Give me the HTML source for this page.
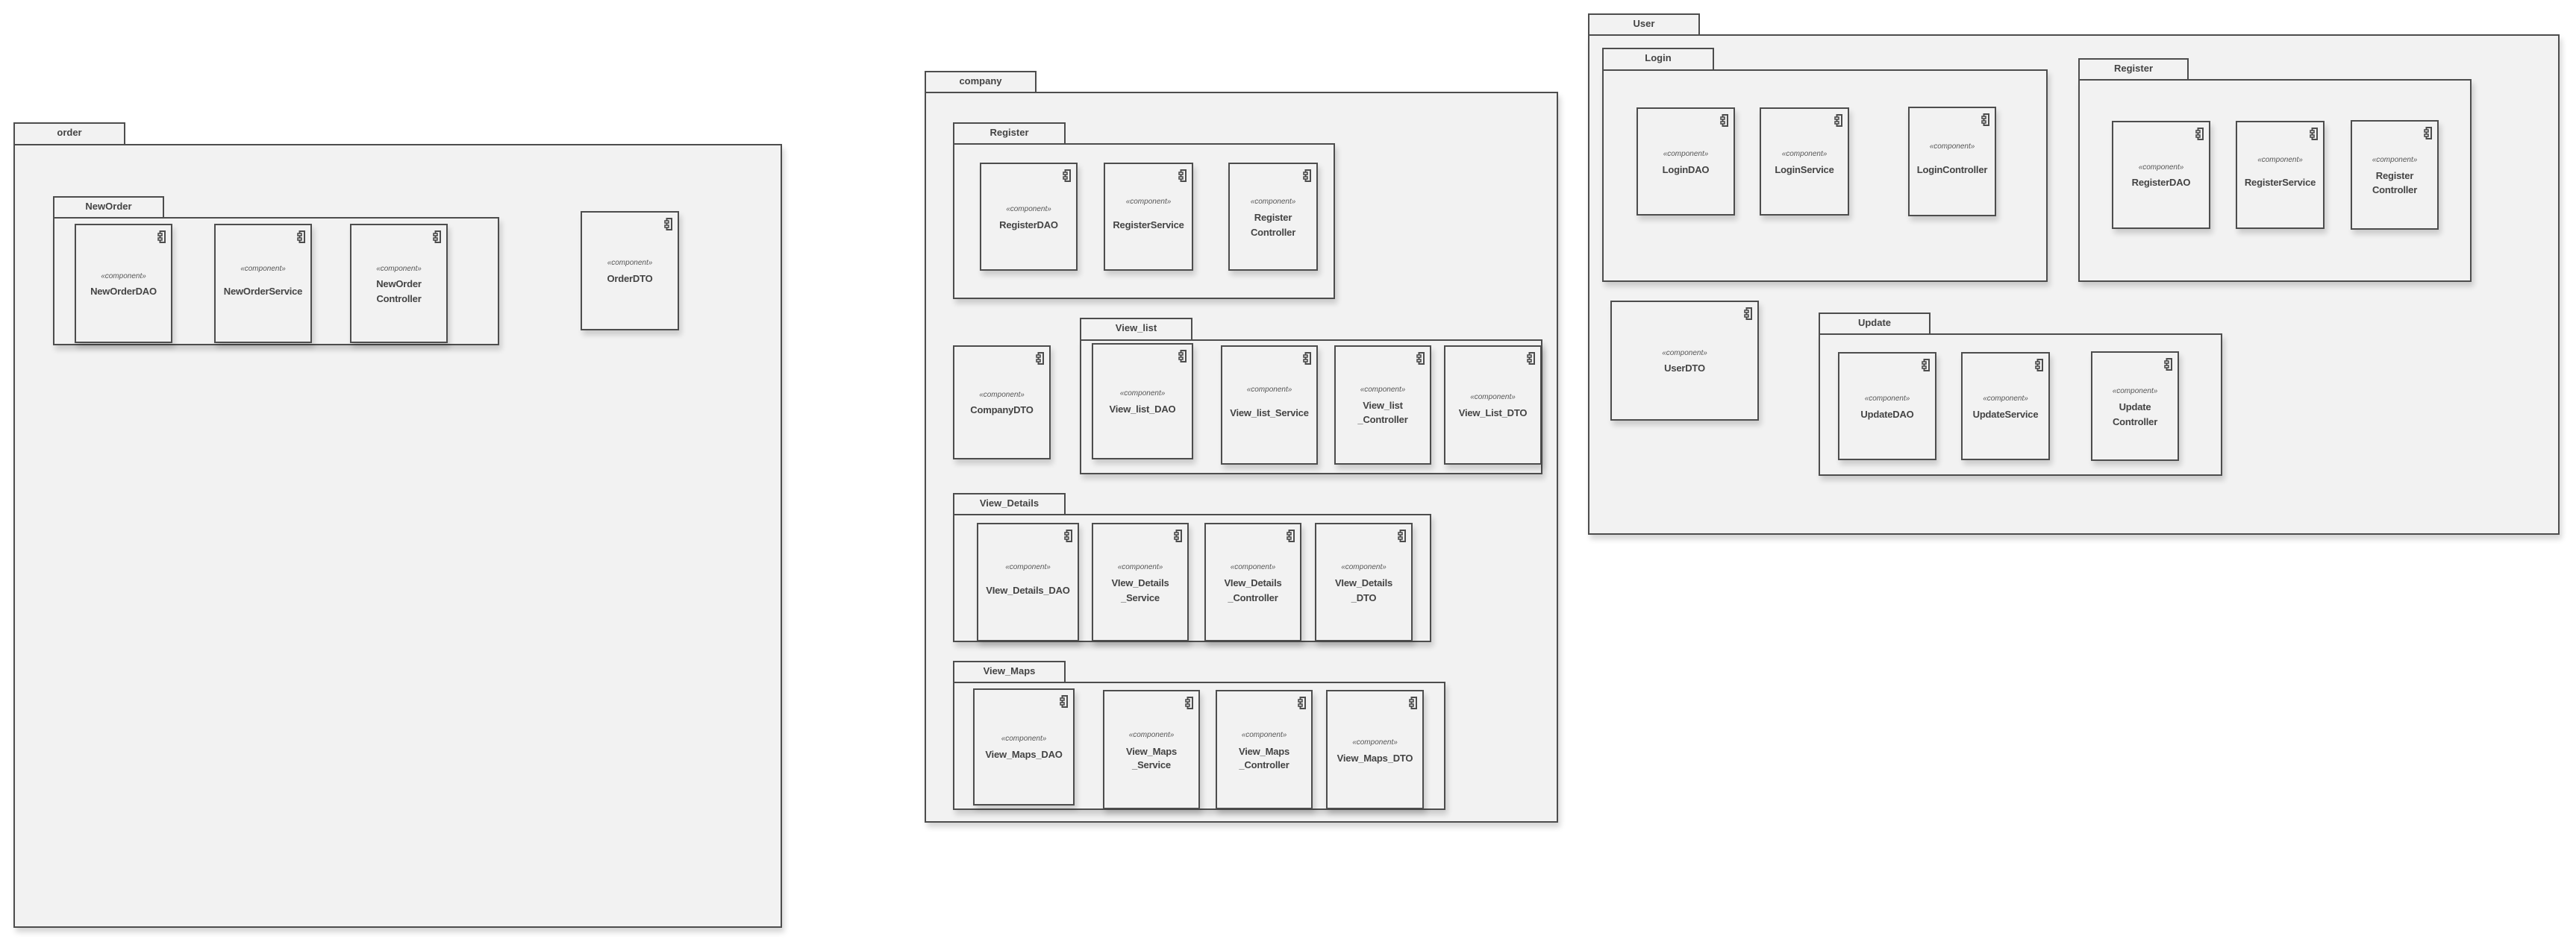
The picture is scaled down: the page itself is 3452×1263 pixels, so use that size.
<!DOCTYPE html>
<html><head><meta charset="utf-8"><style>
html,body{margin:0;padding:0;background:#fff;width:3452px;height:1263px;overflow:hidden;position:relative}
div{box-sizing:border-box}
.b,.t,.c{position:absolute;background:#f2f2f2;border:2px solid #4d4d4d}
.b,.c{box-shadow:3px 6px 7px rgba(0,0,0,.16)}
.t{font:bold 13px "Liberation Sans",sans-serif;color:#444;text-align:center;line-height:24px;border-bottom:none}
.c .i{position:absolute;top:7px;right:7px;width:11px;height:17px}
.s{position:absolute;left:0;width:100%;text-align:center;font:italic 10px "Liberation Sans",sans-serif;color:#555;line-height:14px;height:14px;margin-top:-7px;white-space:nowrap}
.n{position:absolute;left:0;width:100%;text-align:center;font:bold 13px "Liberation Sans",sans-serif;color:#444;line-height:18px;height:18px;margin-top:-9px;white-space:nowrap;letter-spacing:-0.2px}
</style></head><body>
<svg width="0" height="0" style="position:absolute"><defs><symbol id="ic" viewBox="0 0 11 17"><rect x="3.5" y="1" width="6.5" height="15" fill="#f2f2f2" stroke="#4d4d4d" stroke-width="2"/><rect x="1" y="4" width="5" height="3" fill="#f2f2f2" stroke="#4d4d4d" stroke-width="1.6"/><rect x="1" y="10" width="5" height="3" fill="#f2f2f2" stroke="#4d4d4d" stroke-width="1.6"/></symbol></defs></svg>

<!-- ORDER -->
<div class="t" style="left:18px;top:164px;width:150px;height:31px">order</div>
<div class="b" style="left:18px;top:193px;width:1030px;height:1051px"></div>
<div class="t" style="left:71px;top:263px;width:149px;height:30px">NewOrder</div>
<div class="b" style="left:71px;top:291px;width:598px;height:172px"></div>
<div class="c" style="left:100px;top:300px;width:131px;height:160px"><svg class="i"><use href="#ic"/></svg><div class="s" style="top:69px">«component»</div><div class="n" style="top:89px">NewOrderDAO</div></div>
<div class="c" style="left:287px;top:300px;width:131px;height:160px"><svg class="i"><use href="#ic"/></svg><div class="s" style="top:59px">«component»</div><div class="n" style="top:89px">NewOrderService</div></div>
<div class="c" style="left:469px;top:300px;width:131px;height:160px"><svg class="i"><use href="#ic"/></svg><div class="s" style="top:59px">«component»</div><div class="n" style="top:79px">NewOrder</div><div class="n" style="top:99px">Controller</div></div>
<div class="c" style="left:778px;top:283px;width:132px;height:160px"><svg class="i"><use href="#ic"/></svg><div class="s" style="top:68px">«component»</div><div class="n" style="top:89px">OrderDTO</div></div>

<!-- COMPANY -->
<div class="t" style="left:1239px;top:95px;width:150px;height:30px">company</div>
<div class="b" style="left:1239px;top:123px;width:849px;height:980px"></div>
<div class="t" style="left:1277px;top:164px;width:151px;height:30px">Register</div>
<div class="b" style="left:1277px;top:192px;width:512px;height:209px"></div>
<div class="c" style="left:1313px;top:218px;width:131px;height:145px"><svg class="i"><use href="#ic"/></svg><div class="s" style="top:61px">«component»</div><div class="n" style="top:82px">RegisterDAO</div></div>
<div class="c" style="left:1479px;top:218px;width:120px;height:145px"><svg class="i"><use href="#ic"/></svg><div class="s" style="top:51px">«component»</div><div class="n" style="top:82px">RegisterService</div></div>
<div class="c" style="left:1646px;top:218px;width:120px;height:145px"><svg class="i"><use href="#ic"/></svg><div class="s" style="top:51px">«component»</div><div class="n" style="top:72px">Register</div><div class="n" style="top:92px">Controller</div></div>
<div class="c" style="left:1277px;top:463px;width:131px;height:153px"><svg class="i"><use href="#ic"/></svg><div class="s" style="top:65px">«component»</div><div class="n" style="top:85px">CompanyDTO</div></div>
<div class="t" style="left:1447px;top:426px;width:151px;height:31px">View_list</div>
<div class="b" style="left:1447px;top:455px;width:620px;height:181px"></div>
<div class="c" style="left:1463px;top:460px;width:136px;height:156px"><svg class="i"><use href="#ic"/></svg><div class="s" style="top:66px">«component»</div><div class="n" style="top:87px">View_list_DAO</div></div>
<div class="c" style="left:1636px;top:463px;width:130px;height:160px"><svg class="i"><use href="#ic"/></svg><div class="s" style="top:58px">«component»</div><div class="n" style="top:89px">View_list_Service</div></div>
<div class="c" style="left:1788px;top:463px;width:130px;height:160px"><svg class="i"><use href="#ic"/></svg><div class="s" style="top:58px">«component»</div><div class="n" style="top:79px">View_list</div><div class="n" style="top:98px">_Controller</div></div>
<div class="c" style="left:1935px;top:463px;width:131px;height:160px"><svg class="i"><use href="#ic"/></svg><div class="s" style="top:68px">«component»</div><div class="n" style="top:89px">View_List_DTO</div></div>
<div class="t" style="left:1277px;top:661px;width:151px;height:30px">View_Details</div>
<div class="b" style="left:1277px;top:689px;width:641px;height:172px"></div>
<div class="c" style="left:1309px;top:701px;width:137px;height:159px"><svg class="i"><use href="#ic"/></svg><div class="s" style="top:58px">«component»</div><div class="n" style="top:89px">VIew_Details_DAO</div></div>
<div class="c" style="left:1463px;top:701px;width:130px;height:159px"><svg class="i"><use href="#ic"/></svg><div class="s" style="top:58px">«component»</div><div class="n" style="top:79px">VIew_Details</div><div class="n" style="top:99px">_Service</div></div>
<div class="c" style="left:1614px;top:701px;width:130px;height:159px"><svg class="i"><use href="#ic"/></svg><div class="s" style="top:58px">«component»</div><div class="n" style="top:79px">VIew_Details</div><div class="n" style="top:99px">_Controller</div></div>
<div class="c" style="left:1762px;top:701px;width:131px;height:159px"><svg class="i"><use href="#ic"/></svg><div class="s" style="top:58px">«component»</div><div class="n" style="top:79px">VIew_Details</div><div class="n" style="top:99px">_DTO</div></div>
<div class="t" style="left:1277px;top:886px;width:151px;height:30px">View_Maps</div>
<div class="b" style="left:1277px;top:914px;width:660px;height:172px"></div>
<div class="c" style="left:1304px;top:923px;width:136px;height:157px"><svg class="i"><use href="#ic"/></svg><div class="s" style="top:66px">«component»</div><div class="n" style="top:87px">View_Maps_DAO</div></div>
<div class="c" style="left:1478px;top:925px;width:130px;height:160px"><svg class="i"><use href="#ic"/></svg><div class="s" style="top:59px">«component»</div><div class="n" style="top:81px">View_Maps</div><div class="n" style="top:99px">_Service</div></div>
<div class="c" style="left:1629px;top:925px;width:130px;height:160px"><svg class="i"><use href="#ic"/></svg><div class="s" style="top:59px">«component»</div><div class="n" style="top:81px">View_Maps</div><div class="n" style="top:99px">_Controller</div></div>
<div class="c" style="left:1777px;top:925px;width:131px;height:160px"><svg class="i"><use href="#ic"/></svg><div class="s" style="top:69px">«component»</div><div class="n" style="top:90px">View_Maps_DTO</div></div>

<!-- USER -->
<div class="t" style="left:2128px;top:18px;width:150px;height:30px">User</div>
<div class="b" style="left:2128px;top:46px;width:1302px;height:671px"></div>
<div class="t" style="left:2147px;top:64px;width:150px;height:31px">Login</div>
<div class="b" style="left:2147px;top:93px;width:597px;height:285px"></div>
<div class="c" style="left:2193px;top:144px;width:132px;height:145px"><svg class="i"><use href="#ic"/></svg><div class="s" style="top:61px">«component»</div><div class="n" style="top:82px">LoginDAO</div></div>
<div class="c" style="left:2358px;top:144px;width:120px;height:145px"><svg class="i"><use href="#ic"/></svg><div class="s" style="top:61px">«component»</div><div class="n" style="top:82px">LoginService</div></div>
<div class="c" style="left:2557px;top:143px;width:118px;height:147px"><svg class="i"><use href="#ic"/></svg><div class="s" style="top:52px">«component»</div><div class="n" style="top:83px">LoginController</div></div>
<div class="t" style="left:2785px;top:78px;width:148px;height:30px">Register</div>
<div class="b" style="left:2785px;top:106px;width:527px;height:272px"></div>
<div class="c" style="left:2830px;top:162px;width:132px;height:145px"><svg class="i"><use href="#ic"/></svg><div class="s" style="top:61px">«component»</div><div class="n" style="top:81px">RegisterDAO</div></div>
<div class="c" style="left:2996px;top:162px;width:119px;height:145px"><svg class="i"><use href="#ic"/></svg><div class="s" style="top:51px">«component»</div><div class="n" style="top:81px">RegisterService</div></div>
<div class="c" style="left:3150px;top:161px;width:118px;height:147px"><svg class="i"><use href="#ic"/></svg><div class="s" style="top:52px">«component»</div><div class="n" style="top:73px">Register</div><div class="n" style="top:92px">Controller</div></div>
<div class="c" style="left:2158px;top:403px;width:199px;height:161px"><svg class="i"><use href="#ic"/></svg><div class="s" style="top:69px">«component»</div><div class="n" style="top:89px">UserDTO</div></div>
<div class="t" style="left:2437px;top:419px;width:150px;height:30px">Update</div>
<div class="b" style="left:2437px;top:447px;width:541px;height:191px"></div>
<div class="c" style="left:2463px;top:472px;width:132px;height:145px"><svg class="i"><use href="#ic"/></svg><div class="s" style="top:61px">«component»</div><div class="n" style="top:82px">UpdateDAO</div></div>
<div class="c" style="left:2628px;top:472px;width:119px;height:145px"><svg class="i"><use href="#ic"/></svg><div class="s" style="top:61px">«component»</div><div class="n" style="top:82px">UpdateService</div></div>
<div class="c" style="left:2802px;top:471px;width:118px;height:147px"><svg class="i"><use href="#ic"/></svg><div class="s" style="top:52px">«component»</div><div class="n" style="top:73px">Update</div><div class="n" style="top:93px">Controller</div></div>
</body></html>
